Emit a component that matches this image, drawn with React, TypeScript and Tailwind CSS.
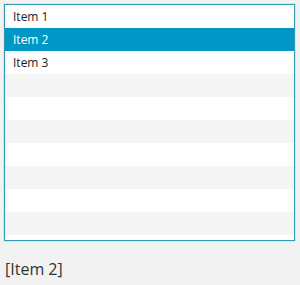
const items = ["Item 1", "Item 2", "Item 3", "", "", "", "", "", "", ""];

export default function App() {
  const selected = 1;
  return (
    <div className="w-[300px] h-[285px] bg-[#f2f2f2] p-1 font-['Open_Sans','Liberation_Sans',sans-serif]">
      <div className="w-[291px] h-[237px] border border-[#2f9cb4] bg-white shadow-[0_0_0_1px_#c8eef5] overflow-hidden">
        {items.map((it, i) => (
          <div
            key={i}
            className={
              "h-[23px] flex items-center pl-2 text-[12px] " +
              (i === selected
                ? "bg-[#0096c6] text-white"
                : i % 2 === 1
                ? "bg-[#f5f5f5] text-[#1e1e1e]"
                : "bg-white text-[#1e1e1e]")
            }
          >
            {it}
          </div>
        ))}
      </div>
      <div className="mt-[16px] pl-px text-[16px] text-[#333]">[Item 2]</div>
    </div>
  );
}
